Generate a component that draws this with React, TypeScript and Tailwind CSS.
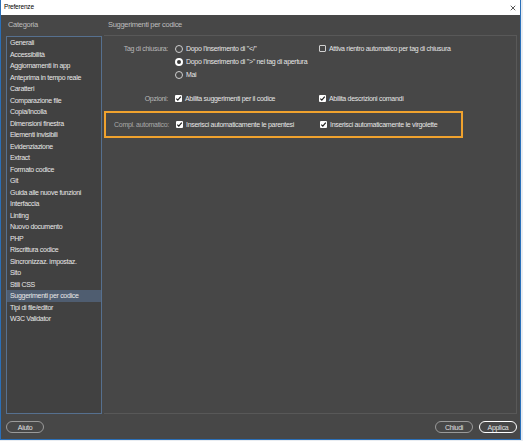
import React from 'react';

const categories = [
  'Generali',
  'Accessibilità',
  'Aggiornamenti in app',
  'Anteprima in tempo reale',
  'Caratteri',
  'Comparazione file',
  'Copia/Incolla',
  'Dimensioni finestra',
  'Elementi invisibili',
  'Evidenziazione',
  'Extract',
  'Formato codice',
  'Git',
  'Guida alle nuove funzioni',
  'Interfaccia',
  'Linting',
  'Nuovo documento',
  'PHP',
  'Riscrittura codice',
  'Sincronizzaz. impostaz.',
  'Sito',
  'Stili CSS',
  'Suggerimenti per codice',
  'Tipi di file/editor',
  'W3C Validator',
];

const Radio = ({ checked, label }: { checked?: boolean; label: string }) => (
  <div className="flex items-center h-[13px] gap-[3px]">
    {checked ? (
      <span className="w-[8px] h-[8px] rounded-full border-[2px] border-white bg-[#3a3a3a] shrink-0" />
    ) : (
      <span className="w-[8px] h-[8px] rounded-full border border-[#cfcfcf] shrink-0" />
    )}
    <span className="text-[#e6e6e6] whitespace-nowrap">{label}</span>
  </div>
);

const Check = ({ checked, label }: { checked?: boolean; label: string }) => (
  <div className="flex items-center h-[13px] gap-[3px]">
    {checked ? (
      <span className="w-[7px] h-[7px] bg-white rounded-[1px] shrink-0 flex items-center justify-center">
        <svg viewBox="0 0 8 8" className="w-[7px] h-[7px]">
          <path d="M1.5 4.2 L3.2 5.9 L6.6 1.8" stroke="#222" strokeWidth="1.4" fill="none" />
        </svg>
      </span>
    ) : (
      <span className="w-[7px] h-[7px] border border-[#d0d0d0] rounded-[1px] shrink-0" />
    )}
    <span className="text-[#e6e6e6] whitespace-nowrap">{label}</span>
  </div>
);

const Pill = ({ label, primary }: { label: string; primary?: boolean }) => (
  <button
    className={`h-[12px] w-[38px] rounded-full flex items-center justify-center text-[#e0e0e0] leading-none ${
      primary ? 'border-[1.5px] border-white' : 'border border-[#9a9a9a]'
    }`}
  >
    {label}
  </button>
);

export default function App() {
  return (
    <div
      className="w-[523px] h-[441px] bg-[#e9edf2] text-[7px] tracking-[-0.3px] leading-none"
      style={{ fontFamily: '"Liberation Sans", Arial, sans-serif' }}
    >
      <div className="w-[521px] h-[440px] flex flex-col border-x border-b border-[#2a6fb8] bg-[#474747]">
        {/* title bar */}
        <div className="h-[15px] bg-white flex items-center justify-between pl-[3px] pr-[4px] shrink-0">
          <span className="text-black text-[6.5px] tracking-[-0.2px]">Preferenze</span>
          <svg viewBox="0 0 8 8" className="w-[6px] h-[6px]">
            <path d="M1 1 L7 7 M7 1 L1 7" stroke="#222" strokeWidth="1" />
          </svg>
        </div>

        {/* headers */}
        <div className="h-[20px] flex items-center shrink-0 text-[#bdbdbd] text-[7.5px]">
          <span className="ml-[7px] w-[100px]">Categoria</span>
          <span>Suggerimenti per codice</span>
        </div>

        {/* main */}
        <div className="flex h-[379px] shrink-0">
          <div className="ml-[5px] w-[96px] h-[378px] mt-[1px] border border-[#56708f] bg-[#414141]">
            {categories.map(c => (
              <div
                key={c}
                className={`h-[11.5px] flex items-center pl-[3px] whitespace-nowrap text-[#e8e8e8] ${
                  c === 'Suggerimenti per codice' ? 'bg-[#4f5d70]' : ''
                }`}
              >
                {c}
              </div>
            ))}
          </div>

          <div className="ml-[2px] w-[413px] border-t border-r border-b border-[#585858] pt-[6px]">
            <div className="grid grid-cols-[64px_137px_1fr] gap-x-[7px]">
              <div className="h-[13px] flex items-center justify-end text-[#b9b9b9]">Tag di chiusura:</div>
              <Radio label={'Dopo l\u2019inserimento di "</"'} />
              <Check label="Attiva rientro automatico per tag di chiusura" />
              <div />
              <Radio checked label={'Dopo l\u2019inserimento di ">" nei tag di apertura'} />
              <div />
              <div />
              <Radio label="Mai" />
              <div />
            </div>

            <div className="grid grid-cols-[64px_137px_1fr] gap-x-[7px] mt-[11px]">
              <div className="h-[13px] flex items-center justify-end text-[#b9b9b9]">Opzioni:</div>
              <Check checked label="Abilita suggerimenti per il codice" />
              <Check checked label="Abilita descrizioni comandi" />
            </div>

            <div className="mt-[6px] w-[359px] h-[27px] border-2 border-[#f0a22e] grid grid-cols-[63px_137px_1fr] gap-x-[7px] items-center">
              <div className="h-[13px] flex items-center justify-end text-[#a9a9a9]">Compl. automatico:</div>
              <Check checked label="Inserisci automaticamente le parentesi" />
              <Check checked label="Inserisci automaticamente le virgolette" />
            </div>
          </div>
        </div>

        {/* footer */}
        <div className="flex-1 flex items-center justify-between pl-[5px] pr-[3px] pt-[1px]">
          <Pill label="Aiuto" />
          <div className="flex gap-[6px]">
            <Pill label="Chiudi" />
            <Pill label="Applica" primary />
          </div>
        </div>
      </div>
    </div>
  );
}
